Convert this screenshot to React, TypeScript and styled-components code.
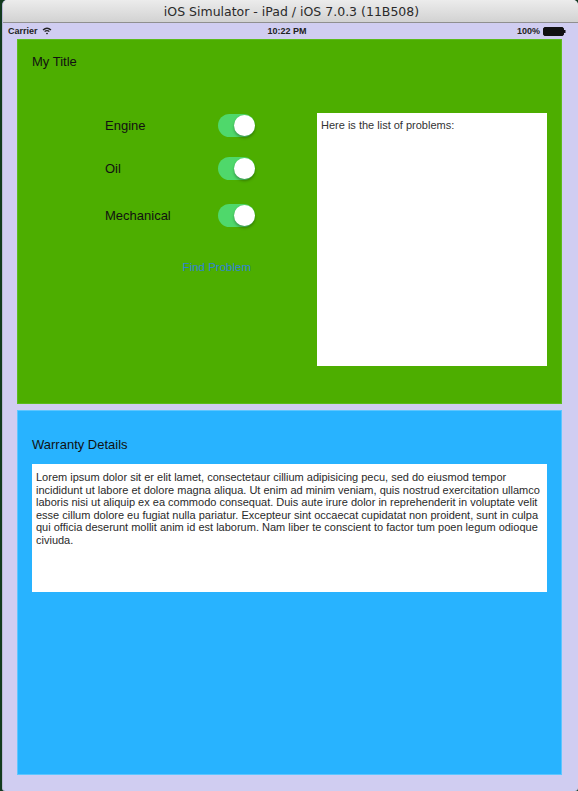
import React from "react";
import styled, { createGlobalStyle } from "styled-components";

const Global = createGlobalStyle`
  html, body { margin: 0; padding: 0; }
  body {
    width: 578px;
    height: 791px;
    overflow: hidden;
    background: #123a1e;
    font-family: "Liberation Sans", Arial, sans-serif;
  }
`;

const Window = styled.div`
  margin-left: 2px;
  width: 576px;
  height: 791px;
  background: #d0cdf1;
  border-radius: 5px 5px 3px 3px;
  overflow: hidden;
  display: flex;
  flex-direction: column;
  box-sizing: border-box;
  border-left: 1px solid #b9b7d6;
`;

const TitleBar = styled.div`
  height: 22px;
  flex: 0 0 22px;
  background: linear-gradient(#ececec, #d2d2d2);
  border-bottom: 1px solid #8f8f8f;
  display: flex;
  align-items: center;
  justify-content: center;
  font-family: "DejaVu Sans", "Liberation Sans", sans-serif;
  font-size: 12.5px;
  color: #2a2a2a;
  padding-left: 2px;
`;

const StatusBar = styled.div`
  height: 16px;
  flex: 0 0 16px;
  display: grid;
  grid-template-columns: 1fr auto 1fr;
  align-items: center;
  padding: 0 12px 0 5px;
  font-size: 9px;
  font-weight: bold;
  color: #222;
`;

const StatusLeft = styled.div`
  display: flex;
  align-items: center;
  gap: 4px;
`;

const StatusRight = styled.div`
  display: flex;
  align-items: center;
  justify-content: flex-end;
  gap: 3px;
`;

const Content = styled.div`
  display: flex;
  flex-direction: column;
  gap: 6px;
  padding: 0 16px 0 14px;
`;

const Panel = styled.div<{ $bg: string; $edge: string }>`
  height: 365px;
  box-sizing: border-box;
  background: ${(p) => p.$bg};
  border: 1px solid ${(p) => p.$edge};
  display: flex;
  flex-direction: column;
  padding: 0 14px;
`;

const PanelTitle = styled.div<{ $top: number }>`
  margin-top: ${(p) => p.$top}px;
  font-size: 13px;
  line-height: 16px;
  color: #111;
`;

const Body = styled.div`
  margin-top: 43px;
  display: flex;
  justify-content: space-between;
`;

const SwitchColumn = styled.div`
  margin-left: 73px;
  display: flex;
  flex-direction: column;
  width: 150px;
`;

const SwitchRow = styled.div<{ $top: number }>`
  margin-top: ${(p) => p.$top}px;
  display: flex;
  align-items: center;
  justify-content: space-between;
  height: 23px;
  font-size: 13px;
  color: #111;
`;

const Track = styled.div`
  width: 37px;
  height: 23px;
  border-radius: 12px;
  background: #4fd86b;
  position: relative;
`;

const Knob = styled.div`
  position: absolute;
  right: 0;
  top: 1px;
  width: 21px;
  height: 21px;
  border-radius: 50%;
  background: #fff;
  box-shadow: 0 2px 3px rgba(0, 0, 0, 0.3);
`;

const LinkButton = styled.div`
  margin-top: 33px;
  align-self: flex-end;
  margin-right: 4px;
  font-size: 11.5px;
  line-height: 14px;
  color: #2f82d8;
`;

const ListBox = styled.div`
  width: 230px;
  height: 253px;
  box-sizing: border-box;
  background: #fff;
  padding: 6px 4px;
  font-size: 11px;
  line-height: 13px;
  color: #333;
`;

const TextBox = styled.div`
  margin-top: 11px;
  height: 128px;
  box-sizing: border-box;
  background: #fff;
  padding: 7px 4px;
  font-size: 11px;
  line-height: 12.6px;
  color: #2a2a2a;
`;

const TextLine = styled.div`
  white-space: nowrap;
`;

const Wifi = () => (
  <svg width="10" height="8" viewBox="0 0 10 8">
    <path d="M1 3 Q5 -0.5 9 3" stroke="#222" strokeWidth="1.3" fill="none" />
    <path d="M2.6 4.6 Q5 2.6 7.4 4.6" stroke="#222" strokeWidth="1.3" fill="none" />
    <path d="M3.8 6.2 L5 7.5 L6.2 6.2 Q5 5.2 3.8 6.2Z" fill="#222" />
  </svg>
);

const Battery = () => (
  <svg width="23" height="9" viewBox="0 0 23 9">
    <rect x="0.5" y="0.5" width="20" height="8" rx="1.5" fill="#111" stroke="#111" />
    <rect x="21" y="3" width="1.5" height="3" fill="#111" />
  </svg>
);

const Toggle = () => (
  <Track>
    <Knob />
  </Track>
);

const switches = [
  { label: "Engine", top: 1 },
  { label: "Oil", top: 20 },
  { label: "Mechanical", top: 24 },
];

const loremLines = [
  "Lorem ipsum dolor sit er elit lamet, consectetaur cillium adipisicing pecu, sed do eiusmod tempor",
  "incididunt ut labore et dolore magna aliqua. Ut enim ad minim veniam, quis nostrud exercitation ullamco",
  "laboris nisi ut aliquip ex ea commodo consequat. Duis aute irure dolor in reprehenderit in voluptate velit",
  "esse cillum dolore eu fugiat nulla pariatur. Excepteur sint occaecat cupidatat non proident, sunt in culpa",
  "qui officia deserunt mollit anim id est laborum. Nam liber te conscient to factor tum poen legum odioque",
  "civiuda.",
];

export default function App() {
  return (
    <>
      <Global />
      <Window>
        <TitleBar>iOS Simulator - iPad / iOS 7.0.3 (11B508)</TitleBar>
        <StatusBar>
          <StatusLeft>
            Carrier <Wifi />
          </StatusLeft>
          <div>10:22 PM</div>
          <StatusRight>
            100% <Battery />
          </StatusRight>
        </StatusBar>
        <Content>
          <Panel $bg="#4dae00" $edge="#5cbb1c">
            <PanelTitle $top={14}>My Title</PanelTitle>
            <Body>
              <SwitchColumn>
                {switches.map((s) => (
                  <SwitchRow key={s.label} $top={s.top}>
                    {s.label}
                    <Toggle />
                  </SwitchRow>
                ))}
                <LinkButton>Find Problem</LinkButton>
              </SwitchColumn>
              <ListBox>Here is the list of problems:</ListBox>
            </Body>
          </Panel>
          <Panel $bg="#28b3ff" $edge="#5ec6ff">
            <PanelTitle $top={26}>Warranty Details</PanelTitle>
            <TextBox>
              {loremLines.map((l, i) => (
                <TextLine key={i}>{l}</TextLine>
              ))}
            </TextBox>
          </Panel>
        </Content>
      </Window>
    </>
  );
}
